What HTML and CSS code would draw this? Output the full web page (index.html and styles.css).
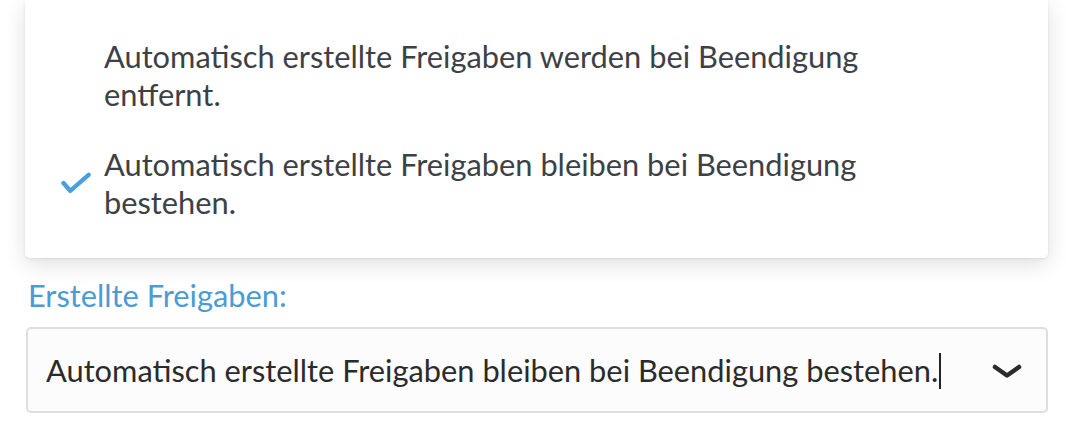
FILE: index.html
```html
<!DOCTYPE html>
<html lang="de">
<head>
<meta charset="utf-8">
<title>Erstellte Freigaben</title>
<link rel="stylesheet" href="styles.css">
</head>
<body>
<div class="wrap">
  <div class="menu">
    <div class="option">
      <span class="icon"></span>
      <span class="text">Automatisch erstellte Freigaben werden bei Beendigung entfernt.</span>
    </div>
    <div class="option selected">
      <span class="icon">
        <svg width="32" height="30" viewBox="0 0 32 30"><path d="M2.5 14 L9.5 22 L28.5 5.5" fill="none" stroke="#4a9fe0" stroke-width="4.5" stroke-linecap="round" stroke-linejoin="round"/></svg>
      </span>
      <span class="text">Automatisch erstellte Freigaben bleiben bei Beendigung bestehen.</span>
    </div>
  </div>
  <div class="label">Erstellte Freigaben:</div>
  <div class="select">
    <span class="value">Automatisch erstellte Freigaben bleiben bei Beendigung bestehen.</span><span class="caret"></span>
    <span class="chev">
      <svg width="30" height="16" viewBox="0 0 30 16"><path d="M3 4 L15 12.5 L27 4" fill="none" stroke="#2b2b2b" stroke-width="4.5" stroke-linecap="round" stroke-linejoin="round"/></svg>
    </span>
  </div>
</div>
</body>
</html>
```
FILE: styles.css
```css
html, body {
  margin: 0;
  padding: 0;
  background: #ffffff;
}
body {
  font-family: Lato, "Open Sans", sans-serif;
  font-size: 30.8px;
  line-height: 38.5px;
  overflow: hidden;
}
.wrap {
  width: 1023px;
  margin-left: 25px;
}
.menu {
  margin-top: -0.5px;
  padding: 22.5px 0 19.5px;
  background: #fff;
  border-radius: 0 0 5px 5px;
  box-shadow: 0 6px 22px rgba(0, 0, 0, 0.13), 0 1px 3px rgba(0, 0, 0, 0.08);
}
.option {
  display: flex;
  align-items: center;
  padding: 15.5px 150px 15.5px 37px;
  gap: 12px;
  color: #3d4146;
}
.icon {
  width: 30px;
  flex: none;
  display: flex;
  align-items: center;
}
.icon svg {
  display: block;
  margin-left: -1px;
}
.label {
  margin-top: 19.5px;
  margin-left: 3px;
  color: #4a9bd6;
}
.select {
  margin-top: 11px;
  margin-left: 1px;
  height: 86px;
  box-sizing: border-box;
  border: 2px solid #dedede;
  border-radius: 5px;
  background: #fcfcfc;
  display: flex;
  align-items: center;
  padding: 2px 24px 0 18px;
  line-height: 36px;
  color: #2b2b2b;
}
.value {
  white-space: nowrap;
}
.caret {
  width: 2px;
  height: 36px;
  background: #222;
  margin-left: 1px;
}
.chev {
  margin-left: auto;
  display: flex;
}
.chev svg {
  display: block;
}
```
